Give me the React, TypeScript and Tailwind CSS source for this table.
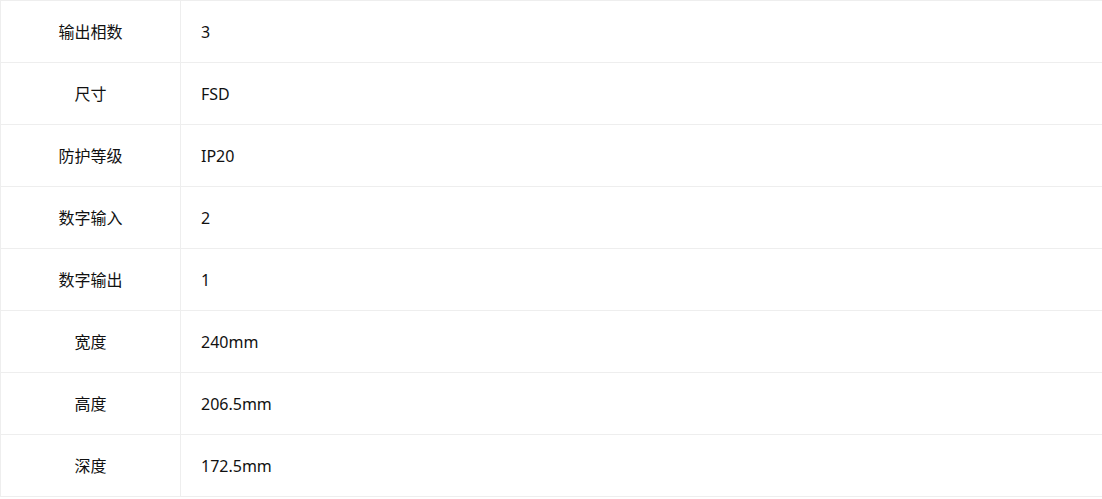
const rows: [string, string][] = [
  ['输出相数', '3'],
  ['尺寸', 'FSD'],
  ['防护等级', 'IP20'],
  ['数字输入', '2'],
  ['数字输出', '1'],
  ['宽度', '240mm'],
  ['高度', '206.5mm'],
  ['深度', '172.5mm'],
];

export default function App() {
  return (
    <div className="w-[1102px] h-[499px] bg-white font-['Noto_Sans','Noto_Sans_CJK_SC',sans-serif] text-[16px] text-[#111]">
      <div className="border-t border-l border-[#eeeeee]">
        {rows.map(([label, value]) => (
          <div key={label} className="flex h-[62px] border-b border-[#eeeeee]">
            <div className="w-[180px] shrink-0 flex items-center justify-center border-r border-[#eeeeee]">
              {label}
            </div>
            <div className="flex-1 flex items-center pl-[20px]">{value}</div>
          </div>
        ))}
      </div>
    </div>
  );
}
